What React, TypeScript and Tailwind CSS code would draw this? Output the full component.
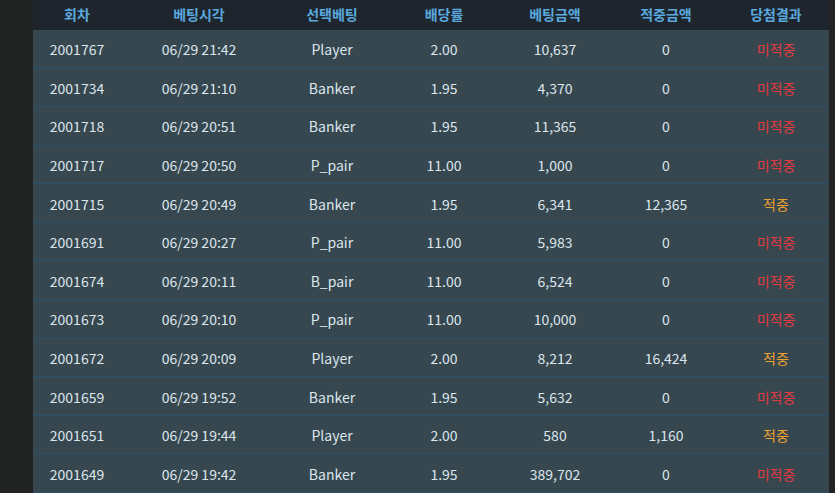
import React from "react";

type Row = {
  round: string;
  time: string;
  pick: string;
  odds: string;
  bet: string;
  win: string;
  hit: boolean;
};

const rows: Row[] = [
  { round: "2001767", time: "06/29 21:42", pick: "Player", odds: "2.00", bet: "10,637", win: "0", hit: false },
  { round: "2001734", time: "06/29 21:10", pick: "Banker", odds: "1.95", bet: "4,370", win: "0", hit: false },
  { round: "2001718", time: "06/29 20:51", pick: "Banker", odds: "1.95", bet: "11,365", win: "0", hit: false },
  { round: "2001717", time: "06/29 20:50", pick: "P_pair", odds: "11.00", bet: "1,000", win: "0", hit: false },
  { round: "2001715", time: "06/29 20:49", pick: "Banker", odds: "1.95", bet: "6,341", win: "12,365", hit: true },
  { round: "2001691", time: "06/29 20:27", pick: "P_pair", odds: "11.00", bet: "5,983", win: "0", hit: false },
  { round: "2001674", time: "06/29 20:11", pick: "B_pair", odds: "11.00", bet: "6,524", win: "0", hit: false },
  { round: "2001673", time: "06/29 20:10", pick: "P_pair", odds: "11.00", bet: "10,000", win: "0", hit: false },
  { round: "2001672", time: "06/29 20:09", pick: "Player", odds: "2.00", bet: "8,212", win: "16,424", hit: true },
  { round: "2001659", time: "06/29 19:52", pick: "Banker", odds: "1.95", bet: "5,632", win: "0", hit: false },
  { round: "2001651", time: "06/29 19:44", pick: "Player", odds: "2.00", bet: "580", win: "1,160", hit: true },
  { round: "2001649", time: "06/29 19:42", pick: "Banker", odds: "1.95", bet: "389,702", win: "0", hit: false },
];

const headers = ["회차", "베팅시각", "선택베팅", "배당률", "베팅금액", "적중금액", "당첨결과"];

const cols = "grid grid-cols-[88px_156px_110px_114px_108px_114px_1fr]";

export default function App() {
  return (
    <div
      className="flex w-[835px] h-[493px] overflow-hidden bg-[#222323] pl-[33px] pr-[6px]"
      style={{ fontFamily: '"Noto Sans CJK KR", "Noto Sans", sans-serif' }}
    >
      <div className="flex-1 flex flex-col">
        {/* Header */}
        <div className={`${cols} h-[30px] items-center bg-[#1e252c] text-[14px] font-bold text-[#5aa8de]`}>
          {headers.map((h) => (
            <div key={h} className="text-center">{h}</div>
          ))}
        </div>

        {/* Rows */}
        {rows.map((r) => (
          <div
            key={r.round}
            className={`${cols} h-[38.6px] shrink-0 items-center pt-[2px] bg-[#37474f] border-b border-[#2b5168] text-[14px] text-[#dbe6ee]`}
          >
            <div className="text-center">{r.round}</div>
            <div className="text-center">{r.time}</div>
            <div className="text-center">{r.pick}</div>
            <div className="text-center">{r.odds}</div>
            <div className="text-center">{r.bet}</div>
            <div className="text-center">{r.win}</div>
            <div className={`text-center ${r.hit ? "text-[#f0a22e]" : "text-[#e23a3e]"}`}>
              {r.hit ? "적중" : "미적중"}
            </div>
          </div>
        ))}
      </div>
    </div>
  );
}
